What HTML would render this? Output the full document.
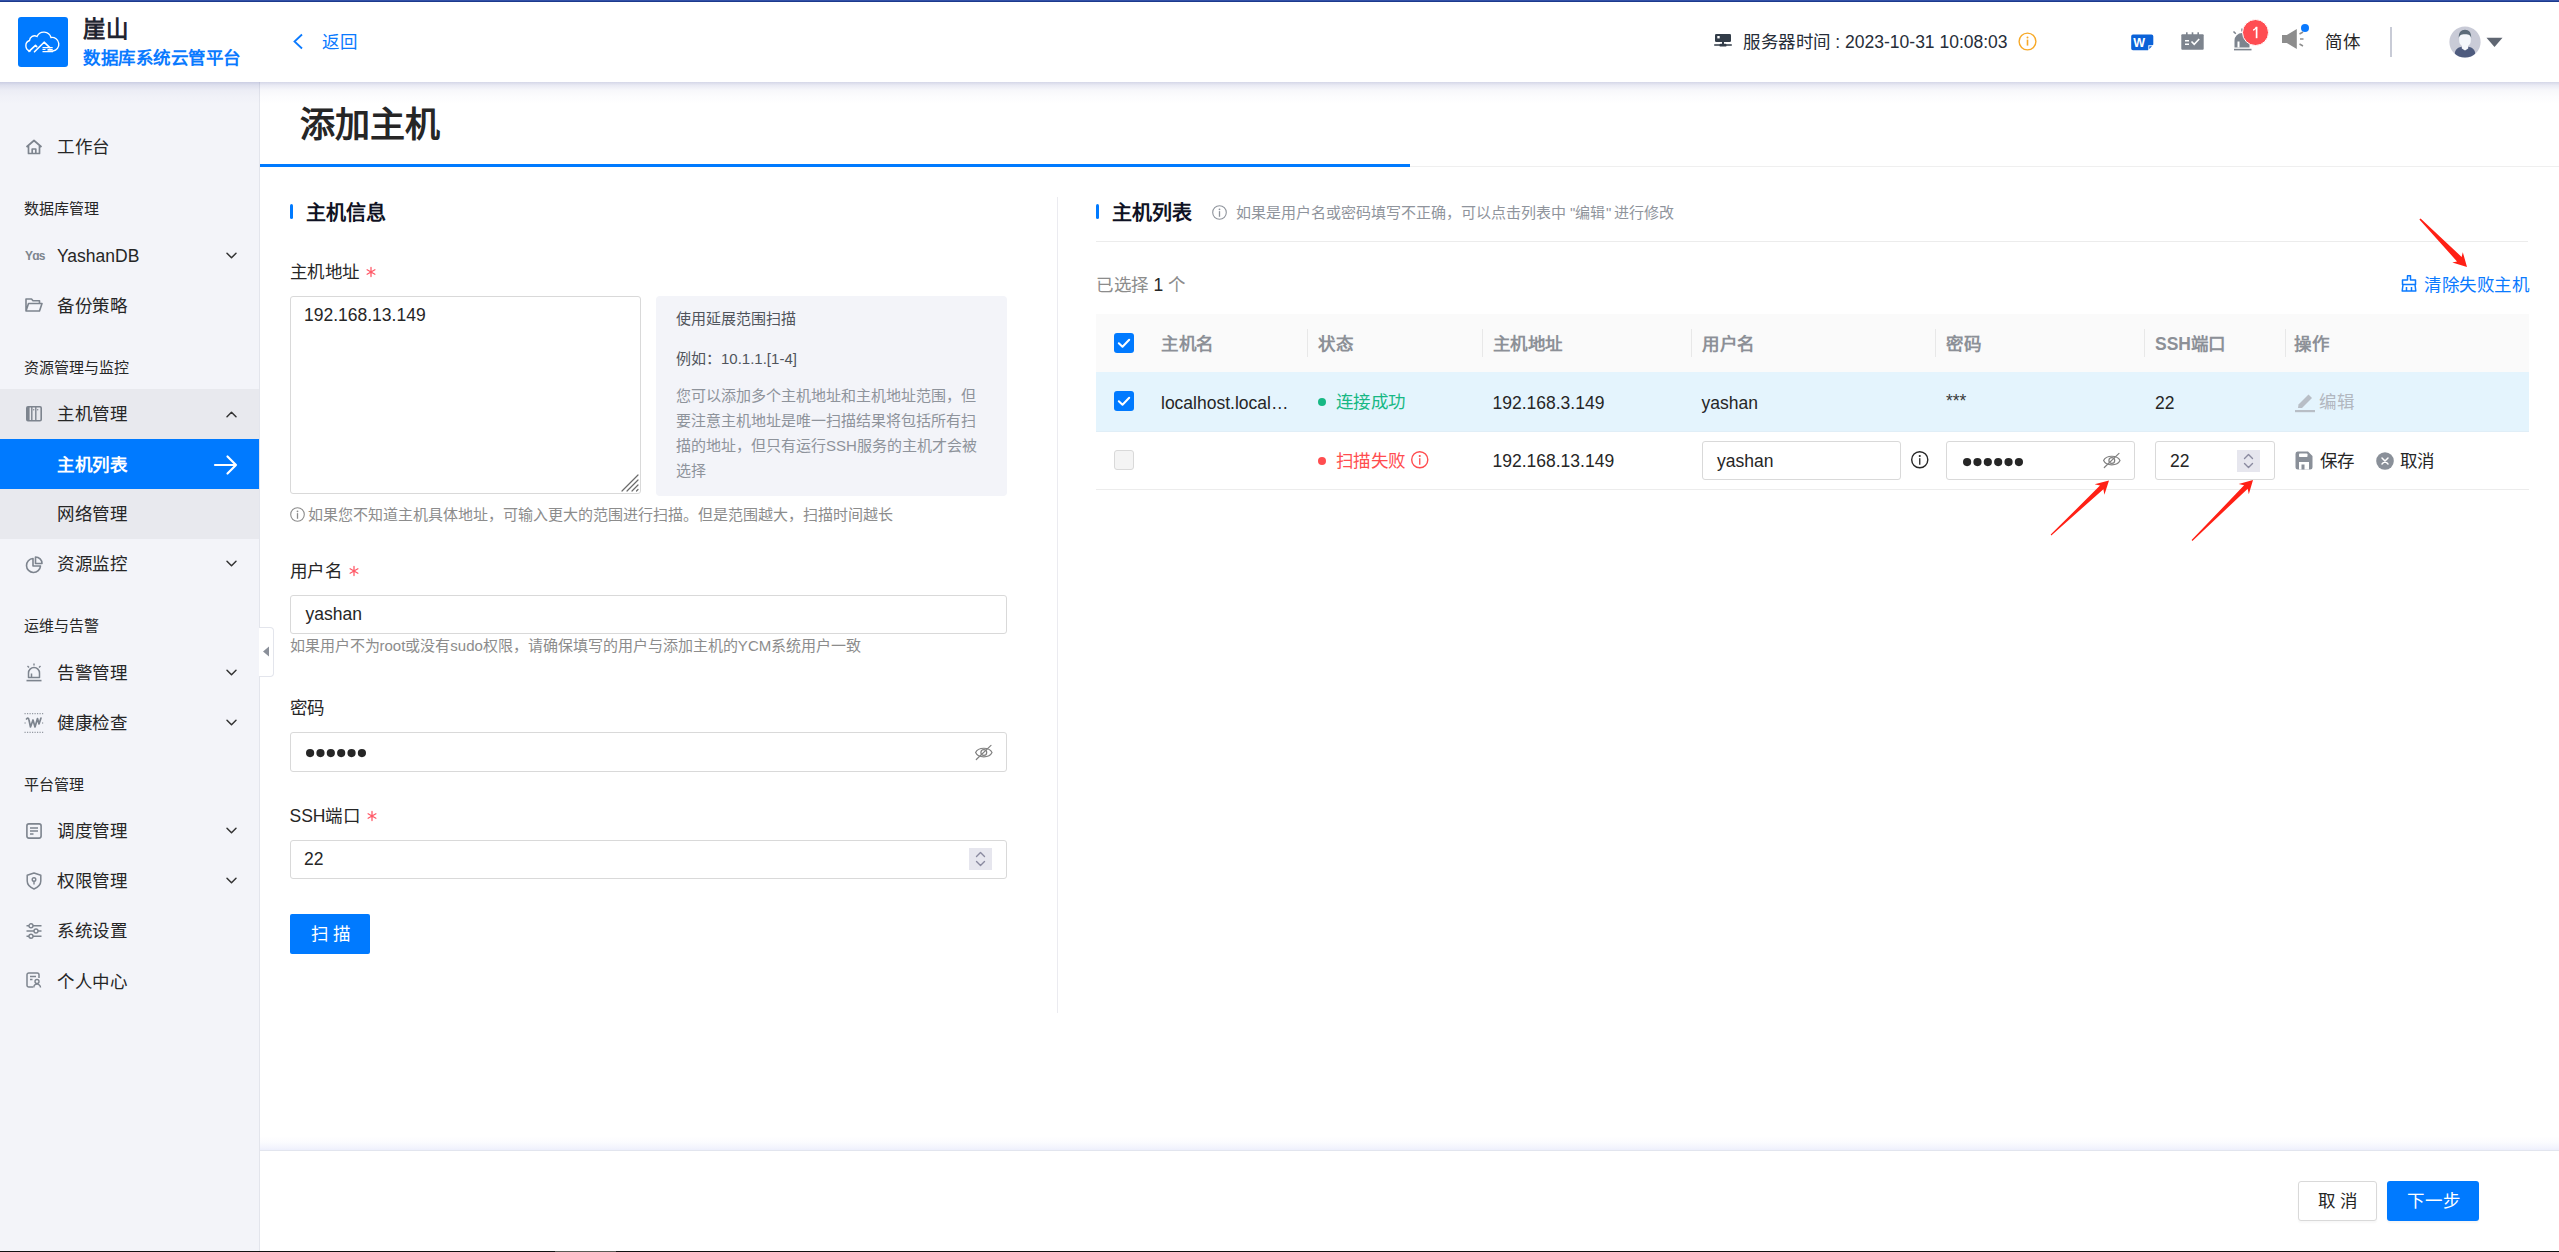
<!DOCTYPE html>
<html lang="zh-CN"><head><meta charset="utf-8">
<style>
*{margin:0;padding:0;box-sizing:border-box}
html,body{width:2559px;height:1252px;overflow:hidden;background:#fff;font-family:"Liberation Sans",sans-serif;color:#262626}
.a{position:absolute;white-space:nowrap}
svg.a{overflow:visible}
</style></head><body>
<div class="a" style="left:0px;top:0px;width:2559px;height:2px;background:linear-gradient(to bottom,#3d5cb4,#112f80);z-index:5"></div>
<div class="a" style="left:0px;top:82px;width:260px;height:1170px;background:#f3f4f9"></div>
<div class="a" style="left:259px;top:82px;width:1px;height:1170px;background:#e3e5ec"></div>
<div class="a" style="left:0px;top:2px;width:2559px;height:80px;background:#fff;z-index:3"></div>
<div class="a" style="left:0px;top:82px;width:2559px;height:22px;z-index:3;background:linear-gradient(to bottom,rgba(60,70,150,0.22) 0%,rgba(60,70,150,0.11) 15%,rgba(60,70,150,0.04) 38%,rgba(60,70,150,0.015) 65%,rgba(60,70,150,0) 100%)"></div>
<div style="position:absolute;left:0;top:0;width:2559px;height:82px;z-index:4">
<div class="a" style="left:18px;top:17px;width:50px;height:50px;background:#007aff;border-radius:3px"></div>
<svg class="a" style="left:24px;top:30px;" width="38" height="26" viewBox="0 0 38 26"><path d="M6 21 A5.5 5.5 0 0 1 5.5 10.5 A5 5 0 0 1 13 6.5 A7.5 7.5 0 0 1 27 7.5 A6.5 6.5 0 0 1 29 21 H24" fill="none" stroke="#fff" stroke-width="1.4" stroke-linecap="round"/><path d="M5 21.4 L11.5 15.4 L12.7 16.6 M10.5 21.8 L20.1 12.2 L25.8 17.6" fill="none" stroke="#fff" stroke-width="1.6" stroke-linecap="round" stroke-linejoin="round"/><path d="M18.5 17.6 H28.7 M18.5 19.5 H21.5 M23.5 19.5 H28.7 M18.5 21.6 H29" stroke="#fff" stroke-width="1.1"/></svg>
<div class="a" style="left:83px;top:13.5px;font-size:22.5px;line-height:32px;color:#1f2430;font-weight:bold;"><span style="letter-spacing:-0.5px">崖山</span></div>
<div class="a" style="left:83px;top:45.3px;font-size:17.5px;line-height:26px;color:#0a7aff;font-weight:bold;"><span style="letter-spacing:0.5px">数据库系统云管平台</span></div>
<svg class="a" style="left:292px;top:33px;" width="12" height="17" viewBox="0 0 12 17"><path d="M10 1.5 L2.5 8.5 L10 15.5" fill="none" stroke="#0a7aff" stroke-width="1.8" stroke-linejoin="miter"/></svg>
<div class="a" style="left:322px;top:29.200000000000003px;font-size:17.5px;line-height:26px;color:#0a7aff;font-weight:normal;"><span style="letter-spacing:0.5px">返回</span></div>
<svg class="a" style="left:1714px;top:34px;" width="18" height="13" viewBox="0 0 18 13"><rect x="1" y="0" width="16" height="8" rx="1.3" fill="#323c48"/><rect x="3.3" y="2" width="2.4" height="2.4" fill="#fff"/><rect x="8" y="8" width="2" height="2.5" fill="#323c48"/><rect x="0" y="10.3" width="18" height="1.5" rx="0.7" fill="#323c48"/><rect x="5.5" y="9.8" width="7" height="2.8" rx="1.2" fill="#323c48"/></svg>
<div class="a" style="left:1743px;top:29.0px;font-size:17.5px;line-height:26px;color:#262d38;font-weight:normal;"><span style="letter-spacing:0.5px">服务器时间</span> : 2023-10-31 10:08:03</div>
<svg class="a" style="left:2018px;top:32px;" width="19" height="19" viewBox="0 0 19 19"><circle cx="9.5" cy="9.5" r="8.4" fill="none" stroke="#f7a928" stroke-width="1.4"/><circle cx="9.5" cy="5.6" r="1" fill="#f7a928"/><rect x="8.7" y="7.6" width="1.6" height="6" fill="#f7a928"/></svg>
<svg class="a" style="left:2131px;top:34px;" width="23" height="17" viewBox="0 0 23 17"><path d="M2 0.5 H20.5 A1.8 1.8 0 0 1 22.3 2.3 V10.5 L17 16.3 H2 A1.8 1.8 0 0 1 0.2 14.5 V2.3 A1.8 1.8 0 0 1 2 0.5 Z" fill="#0b62d8"/><path d="M17.3 16.3 V11.2 H22.3 Z" fill="#fff"/><path d="M18.3 15 V12.2 H21 Z" fill="#0b62d8"/><text x="2.2" y="13.2" font-family="Liberation Sans" font-weight="bold" font-size="12.5" fill="#fff">W</text></svg>
<svg class="a" style="left:2181px;top:32px;" width="23" height="18" viewBox="0 0 23 18"><rect x="0.3" y="2.3" width="22.4" height="15.4" rx="1" fill="#7d848e"/><rect x="5" y="0.3" width="1.6" height="3" fill="#7d848e"/><rect x="10.7" y="0.3" width="1.6" height="3" fill="#7d848e"/><rect x="16.4" y="0.3" width="1.6" height="3" fill="#7d848e"/><rect x="4" y="8" width="4" height="1.5" fill="#fff"/><rect x="4" y="11.5" width="4" height="1.5" fill="#fff"/><path d="M10.5 9.5 L13.2 12.3 L18.2 7" fill="none" stroke="#fff" stroke-width="1.6"/></svg>
<svg class="a" style="left:2232px;top:28px;" width="20" height="23" viewBox="0 0 20 23"><path d="M2.5 19.5 V12.5 A7.5 7.5 0 0 1 17.5 12.5 V19.5 Z" fill="#7d848e"/><rect x="5.5" y="13.5" width="2" height="6" fill="#fff"/><rect x="2" y="20.8" width="17.5" height="1.6" fill="#7d848e"/><path d="M10 0.5 V3.5 M1.5 3.5 L3.8 5.8" stroke="#7d848e" stroke-width="1.5"/></svg>
<div class="a" style="left:2242px;top:19px;width:27px;height:27px;background:#ff4d52;border-radius:50%;border:1px solid #fff"></div>
<svg class="a" style="left:2252px;top:26px;" width="8" height="13" viewBox="0 0 8 13"><path d="M4.6 0.8 V12.2" stroke="#fff" stroke-width="1.7"/><path d="M4.6 1 C3.8 2.6 2.6 3.6 1.2 4.2" fill="none" stroke="#fff" stroke-width="1.5"/></svg>
<svg class="a" style="left:2282px;top:28px;" width="23" height="22" viewBox="0 0 23 22"><path d="M0 7 H4.8 L14.8 1 V21 L4.8 15 H0 Z" fill="#8d8d8d"/><path d="M17.5 6 L21 4 M18 11 H21.5 M17.5 16 L21 18" stroke="#8d8d8d" stroke-width="1.5"/></svg>
<div class="a" style="left:2301px;top:24px;width:8px;height:8px;background:#0a7aff;border-radius:50%"></div>
<div class="a" style="left:2325px;top:28.9px;font-size:17.5px;line-height:26px;color:#262626;font-weight:normal;"><span style="letter-spacing:0.5px">简体</span></div>
<div class="a" style="left:2390px;top:27px;width:2px;height:30px;background:#c8cbd6"></div>
<svg class="a" style="left:2449px;top:26px;" width="32" height="32" viewBox="0 0 32 32"><defs><clipPath id="avc"><circle cx="16" cy="16" r="15.6"/></clipPath></defs><circle cx="16" cy="16" r="15.6" fill="#c9cbd7"/><g clip-path="url(#avc)"><path d="M5.5 30 C5.5 22.5 9.5 20.5 16 20.5 C22.5 20.5 26.5 22.5 26.5 30 V33 H5.5 Z" fill="#4e5b7e"/><path d="M12.8 19 H19.2 V22.5 L16 24.5 L12.8 22.5 Z" fill="#f4f7fb"/><path d="M10.2 10.5 C10.2 6.5 12.5 4.5 16 4.5 C19.5 4.5 21.8 6.5 21.8 10.5 V14.5 C21.8 18.5 19 20.5 16 20.5 C13 20.5 10.2 18.5 10.2 14.5 Z" fill="#f4f7fb"/><path d="M9.8 12 C9.5 6.5 12 3.8 16 3.8 C20 3.8 22.5 6.5 22.2 12 C21.5 9.5 20.5 8.2 16 8.2 C11.5 8.2 10.5 9.5 9.8 12 Z" fill="#5b6b79"/></g></svg>
<svg class="a" style="left:2486px;top:37px;" width="17" height="11" viewBox="0 0 17 11"><path d="M0.5 0.8 H16.5 L8.5 10 Z" fill="#5f6672"/></svg>
</div>
<div class="a" style="left:0px;top:389px;width:259px;height:150px;background:#e8e9ee"></div>
<div class="a" style="left:0px;top:439px;width:259px;height:50px;background:#007aff"></div>
<svg class="a" style="left:25px;top:139px;" width="18" height="16" viewBox="0 0 18 16"><path d="M1.5 8 L9 1.5 L16.5 8 M3.5 6.5 V14.5 H14.5 V6.5 M7.2 14.5 V10 H10.8 V14.5" fill="none" stroke="#7d848e" stroke-width="1.7" stroke-linejoin="round"/></svg>
<div class="a" style="left:57px;top:132.0px;font-size:17.5px;line-height:30px;color:#262626;font-weight:normal;"><span style="letter-spacing:0.5px">工作台</span></div>
<div class="a" style="left:24px;top:196.9px;font-size:15px;line-height:24px;color:#262626;font-weight:normal;">数据库管理</div>
<div class="a" style="left:25px;top:248px;font-size:12px;line-height:16px;color:#7d848e;font-weight:bold;letter-spacing:-0.8px">Y&#593;s</div>
<div class="a" style="left:57px;top:241.0px;font-size:17.5px;line-height:30px;color:#262626;font-weight:normal;">YashanDB</div>
<svg class="a" style="left:226px;top:252.0px;" width="11" height="7" viewBox="0 0 11 6.5"><path d="M1 1 L5.5 5.5 L10 1" fill="none" stroke="#333" stroke-width="1.5" stroke-linecap="round" stroke-linejoin="round"/></svg>
<svg class="a" style="left:25px;top:297px;" width="18" height="16" viewBox="0 0 18 16"><path d="M1 14 V2 H6.5 L8 3.8 H14.5 V6.5 M1 14 L3.5 6.5 H17 L14.5 14 Z" fill="none" stroke="#7d848e" stroke-width="1.6" stroke-linejoin="round"/></svg>
<div class="a" style="left:57px;top:291.0px;font-size:17.5px;line-height:30px;color:#262626;font-weight:normal;"><span style="letter-spacing:0.5px">备份策略</span></div>
<div class="a" style="left:24px;top:356.2px;font-size:15px;line-height:24px;color:#262626;font-weight:normal;">资源管理与监控</div>
<svg class="a" style="left:26px;top:406px;" width="16" height="16" viewBox="0 0 16 16"><rect x="0.8" y="0.8" width="14.4" height="14" rx="1.2" fill="none" stroke="#7d848e" stroke-width="1.6"/><rect x="1" y="1" width="2.6" height="13.6" fill="#7d848e"/><path d="M5.8 1 V14.6 M9.8 1 V14.6" stroke="#7d848e" stroke-width="1.4"/><circle cx="7.7" cy="3.8" r="0.7" fill="#7d848e"/><circle cx="11.7" cy="3.8" r="0.7" fill="#7d848e"/></svg>
<div class="a" style="left:57px;top:398.9px;font-size:17.5px;line-height:30px;color:#262626;font-weight:normal;"><span style="letter-spacing:0.5px">主机管理</span></div>
<svg class="a" style="left:226px;top:410.9px;" width="11" height="7" viewBox="0 0 11 6.5"><path d="M1 5.5 L5.5 1 L10 5.5" fill="none" stroke="#333" stroke-width="1.5" stroke-linecap="round" stroke-linejoin="round"/></svg>
<div class="a" style="left:57px;top:449.8px;font-size:17.5px;line-height:30px;color:#fff;font-weight:bold;"><span style="letter-spacing:0.5px">主机列表</span></div>
<svg class="a" style="left:214px;top:455px;" width="24" height="20" viewBox="0 0 24 20"><path d="M1 10 H22 M13.5 1.5 L22 10 L13.5 18.5" fill="none" stroke="#fff" stroke-width="2.2" stroke-linecap="round" stroke-linejoin="round"/></svg>
<div class="a" style="left:57px;top:499.0px;font-size:17.5px;line-height:30px;color:#262626;font-weight:normal;"><span style="letter-spacing:0.5px">网络管理</span></div>
<svg class="a" style="left:25px;top:556px;" width="18" height="18" viewBox="0 0 18 18"><path d="M8 2.5 A7 7 0 1 0 15.5 10 H8 Z" fill="none" stroke="#7d848e" stroke-width="1.6" stroke-linejoin="round"/><path d="M10.5 1 V7.5 H17 A6.5 6.5 0 0 0 10.5 1 Z" fill="none" stroke="#7d848e" stroke-width="1.6" stroke-linejoin="round"/></svg>
<div class="a" style="left:57px;top:549.0px;font-size:17.5px;line-height:30px;color:#262626;font-weight:normal;"><span style="letter-spacing:0.5px">资源监控</span></div>
<svg class="a" style="left:226px;top:560.0px;" width="11" height="7" viewBox="0 0 11 6.5"><path d="M1 1 L5.5 5.5 L10 1" fill="none" stroke="#333" stroke-width="1.5" stroke-linecap="round" stroke-linejoin="round"/></svg>
<div class="a" style="left:24px;top:614.3px;font-size:15px;line-height:24px;color:#262626;font-weight:normal;">运维与告警</div>
<svg class="a" style="left:26px;top:663px;" width="16" height="19" viewBox="0 0 16 19"><path d="M2.5 14.5 V10 A5.5 5.5 0 0 1 13.5 10 V14.5 Z M5.5 14.5 V10.5" fill="none" stroke="#7d848e" stroke-width="1.5" stroke-linejoin="round"/><path d="M8 0.5 V2.5 M1.5 3 L3 4.5 M14.5 3 L13 4.5" stroke="#7d848e" stroke-width="1.4"/><rect x="0.5" y="16.8" width="15" height="1.6" fill="#7d848e"/></svg>
<div class="a" style="left:57px;top:657.5px;font-size:17.5px;line-height:30px;color:#262626;font-weight:normal;"><span style="letter-spacing:0.5px">告警管理</span></div>
<svg class="a" style="left:226px;top:668.5px;" width="11" height="7" viewBox="0 0 11 6.5"><path d="M1 1 L5.5 5.5 L10 1" fill="none" stroke="#333" stroke-width="1.5" stroke-linecap="round" stroke-linejoin="round"/></svg>
<svg class="a" style="left:24px;top:713px;" width="20" height="20" viewBox="0 0 20 20"><path d="M0.5 0.7 H20 M0.5 19.3 H20 M0.5 10 H2 M18 10 H20" stroke="#7d848e" stroke-width="1" stroke-dasharray="1.2 1.3"/><path d="M2.5 6 Q4.5 4 5 7 L6.5 14 L9 7 L11 14 L13.5 5.5 L15 11 L17 5" fill="none" stroke="#7d848e" stroke-width="1.7" stroke-linejoin="round" stroke-linecap="round"/></svg>
<div class="a" style="left:57px;top:707.7px;font-size:17.5px;line-height:30px;color:#262626;font-weight:normal;"><span style="letter-spacing:0.5px">健康检查</span></div>
<svg class="a" style="left:226px;top:718.7px;" width="11" height="7" viewBox="0 0 11 6.5"><path d="M1 1 L5.5 5.5 L10 1" fill="none" stroke="#333" stroke-width="1.5" stroke-linecap="round" stroke-linejoin="round"/></svg>
<div class="a" style="left:24px;top:772.9px;font-size:15px;line-height:24px;color:#262626;font-weight:normal;">平台管理</div>
<svg class="a" style="left:26px;top:823px;" width="16" height="16" viewBox="0 0 16 16"><rect x="0.9" y="0.9" width="14.2" height="14.2" rx="2" fill="none" stroke="#7d848e" stroke-width="1.6"/><path d="M4 5 H12 M4 8 H12 M4 11 H7.5" stroke="#7d848e" stroke-width="1.4"/></svg>
<div class="a" style="left:57px;top:816.0px;font-size:17.5px;line-height:30px;color:#262626;font-weight:normal;"><span style="letter-spacing:0.5px">调度管理</span></div>
<svg class="a" style="left:226px;top:827.0px;" width="11" height="7" viewBox="0 0 11 6.5"><path d="M1 1 L5.5 5.5 L10 1" fill="none" stroke="#333" stroke-width="1.5" stroke-linecap="round" stroke-linejoin="round"/></svg>
<svg class="a" style="left:26px;top:872px;" width="16" height="18" viewBox="0 0 16 18"><path d="M8 1 L14.8 3.2 V9 C14.8 13 11.5 15.5 8 17 C4.5 15.5 1.2 13 1.2 9 V3.2 Z" fill="none" stroke="#7d848e" stroke-width="1.5" stroke-linejoin="round"/><circle cx="8" cy="7.5" r="1.8" fill="none" stroke="#7d848e" stroke-width="1.4"/><path d="M8 9.3 V12.5" stroke="#7d848e" stroke-width="1.4"/></svg>
<div class="a" style="left:57px;top:865.8px;font-size:17.5px;line-height:30px;color:#262626;font-weight:normal;"><span style="letter-spacing:0.5px">权限管理</span></div>
<svg class="a" style="left:226px;top:876.8px;" width="11" height="7" viewBox="0 0 11 6.5"><path d="M1 1 L5.5 5.5 L10 1" fill="none" stroke="#333" stroke-width="1.5" stroke-linecap="round" stroke-linejoin="round"/></svg>
<svg class="a" style="left:26px;top:923px;" width="16" height="16" viewBox="0 0 16 16"><path d="M0.5 2.8 H3 M7 2.8 H15.5 M0.5 8 H8 M12 8 H15.5 M0.5 13.2 H3 M7 13.2 H15.5" stroke="#7d848e" stroke-width="1.5"/><circle cx="5" cy="2.8" r="2" fill="none" stroke="#7d848e" stroke-width="1.4"/><circle cx="10" cy="8" r="2" fill="none" stroke="#7d848e" stroke-width="1.4"/><circle cx="5" cy="13.2" r="2" fill="none" stroke="#7d848e" stroke-width="1.4"/></svg>
<div class="a" style="left:57px;top:915.5px;font-size:17.5px;line-height:30px;color:#262626;font-weight:normal;"><span style="letter-spacing:0.5px">系统设置</span></div>
<svg class="a" style="left:26px;top:972px;" width="16" height="16" viewBox="0 0 16 16"><path d="M7 15 H2.8 A1.8 1.8 0 0 1 1 13.2 V2.8 A1.8 1.8 0 0 1 2.8 1 H11.2 A1.8 1.8 0 0 1 13 2.8 V6" fill="none" stroke="#7d848e" stroke-width="1.5"/><path d="M4 4.5 H10 M4 7.5 H6.5" stroke="#7d848e" stroke-width="1.3"/><circle cx="11" cy="9.5" r="2" fill="none" stroke="#7d848e" stroke-width="1.4"/><path d="M7.8 15.5 A3.3 3.3 0 0 1 14.5 15.5" fill="none" stroke="#7d848e" stroke-width="1.4"/></svg>
<div class="a" style="left:57px;top:966.5px;font-size:17.5px;line-height:30px;color:#262626;font-weight:normal;"><span style="letter-spacing:0.5px">个人中心</span></div>
<div class="a" style="left:259px;top:627px;width:15px;height:50px;background:#fff;border:1px solid #e3e5ec;border-left:none;border-radius:0 4px 4px 0;z-index:2"></div>
<svg class="a" style="left:262px;top:646px;z-index:3" width="8" height="11" viewBox="0 0 8 11"><path d="M7 0.5 V10.5 L1 5.5 Z" fill="#8a8f99"/></svg>
<div class="a" style="left:300px;top:100.2px;font-size:35px;line-height:50px;color:#262626;font-weight:bold;">添加主机</div>
<div class="a" style="left:260px;top:166px;width:2299px;height:1px;background:#efefef"></div>
<div class="a" style="left:260px;top:164px;width:1150px;height:3px;background:#007aff"></div>
<div class="a" style="left:1057px;top:197px;width:1px;height:816px;background:#ebebf0"></div>
<div class="a" style="left:290px;top:204px;width:3px;height:15px;background:#007aff;border-radius:2px"></div>
<div class="a" style="left:306px;top:197.5px;font-size:20px;line-height:30px;color:#0f1223;font-weight:bold;">主机信息</div>
<div class="a" style="left:289.5px;top:256.7px;font-size:17.5px;line-height:30px;color:#262626;font-weight:normal;"><span style="letter-spacing:0.5px">主机地址</span></div>
<svg class="a" style="left:366px;top:266.5px;" width="10" height="10" viewBox="0 0 10 10"><path d="M5 0.5 V9.5 M1.1 2.75 L8.9 7.25 M1.1 7.25 L8.9 2.75" stroke="#ff5a68" stroke-width="1.3" stroke-linecap="round"/></svg>
<div class="a" style="left:290px;top:296px;width:351px;height:198px;border:1px solid #d9d9d9;border-radius:3px;background:#fff"></div>
<div class="a" style="left:304px;top:302.0px;font-size:17.5px;line-height:26px;color:#262626;font-weight:normal;">192.168.13.149</div>
<svg class="a" style="left:620px;top:473px;" width="20" height="20" viewBox="0 0 20 20"><path d="M2 18 L18 2 M7 18 L18 7 M12 18 L18 12 M16.5 18 L18 16.5" stroke="#6b6b6b" stroke-width="1.2" stroke-linecap="round"/></svg>
<div class="a" style="left:656px;top:296px;width:351px;height:200px;background:#f3f4f9;border-radius:4px"></div>
<div class="a" style="left:676px;top:306.5px;font-size:15px;line-height:24px;color:#50545c;font-weight:normal;">使用延展范围扫描</div>
<div class="a" style="left:676px;top:347.0px;font-size:15px;line-height:24px;color:#50545c;font-weight:normal;">例如：10.1.1.[1-4]</div>
<div class="a" style="left:676px;top:383px;width:312px;white-space:normal;font-size:15px;line-height:25px;color:#8e939b">您可以添加多个主机地址和主机地址范围，但要注意主机地址是唯一扫描结果将包括所有扫描的地址，但只有运行SSH服务的主机才会被选择</div>
<svg class="a" style="left:290px;top:507px;" width="15" height="15" viewBox="0 0 15 15"><circle cx="7.5" cy="7.5" r="6.8" fill="none" stroke="#8c8c8c" stroke-width="1.1"/><circle cx="7.5" cy="4.35" r="0.90" fill="#8c8c8c"/><rect x="6.85" y="6.15" width="1.3" height="5.62" fill="#8c8c8c"/></svg>
<div class="a" style="left:307.5px;top:503.29999999999995px;font-size:15px;line-height:24px;color:#8c8c8c;font-weight:normal;">如果您不知道主机具体地址，可输入更大的范围进行扫描。但是范围越大，扫描时间越长</div>
<div class="a" style="left:289.5px;top:556.2px;font-size:17.5px;line-height:30px;color:#262626;font-weight:normal;"><span style="letter-spacing:0.5px">用户名</span></div>
<svg class="a" style="left:349px;top:566px;" width="10" height="10" viewBox="0 0 10 10"><path d="M5 0.5 V9.5 M1.1 2.75 L8.9 7.25 M1.1 7.25 L8.9 2.75" stroke="#ff5a68" stroke-width="1.3" stroke-linecap="round"/></svg>
<div class="a" style="left:290px;top:595px;width:717px;height:39px;border:1px solid #d9d9d9;border-radius:3px;background:#fff"></div>
<div class="a" style="left:305.5px;top:601.0px;font-size:17.5px;line-height:26px;color:#262626;font-weight:normal;">yashan</div>
<div class="a" style="left:289.5px;top:634.2px;font-size:15px;line-height:24px;color:#8c8c8c;font-weight:normal;">如果用户不为root或没有sudo权限，请确保填写的用户与添加主机的YCM系统用户一致</div>
<div class="a" style="left:289.5px;top:693.4px;font-size:17.5px;line-height:30px;color:#262626;font-weight:normal;"><span style="letter-spacing:0.5px">密码</span></div>
<div class="a" style="left:290px;top:732px;width:717px;height:40px;border:1px solid #d9d9d9;border-radius:3px;background:#fff"></div>
<svg class="a" style="left:306.2px;top:748.6999999999999px;" width="64" height="9" viewBox="0 0 64 9"><circle cx="4.10" cy="4.1" r="4.1" fill="#262626"/><circle cx="14.46" cy="4.1" r="4.1" fill="#262626"/><circle cx="24.82" cy="4.1" r="4.1" fill="#262626"/><circle cx="35.18" cy="4.1" r="4.1" fill="#262626"/><circle cx="45.54" cy="4.1" r="4.1" fill="#262626"/><circle cx="55.90" cy="4.1" r="4.1" fill="#262626"/></svg>
<svg class="a" style="left:975px;top:743.5px;" width="18" height="17" viewBox="0 0 18 17"><path d="M0.6 8.5 C3.2 2.8 14.4 2.8 17 8.5 C14.4 14.2 3.2 14.2 0.6 8.5 Z" fill="none" stroke="#808080" stroke-width="1.2"/><circle cx="8.8" cy="8.5" r="2.9" fill="none" stroke="#808080" stroke-width="1.2"/><path d="M16 1.4 L1.3 15.5" stroke="#808080" stroke-width="1.2" stroke-linecap="round"/></svg>
<div class="a" style="left:289.5px;top:800.8px;font-size:17.5px;line-height:30px;color:#262626;font-weight:normal;">SSH<span style="letter-spacing:0.5px">端口</span></div>
<svg class="a" style="left:367px;top:810.5px;" width="10" height="10" viewBox="0 0 10 10"><path d="M5 0.5 V9.5 M1.1 2.75 L8.9 7.25 M1.1 7.25 L8.9 2.75" stroke="#ff5a68" stroke-width="1.3" stroke-linecap="round"/></svg>
<div class="a" style="left:290px;top:840px;width:717px;height:39px;border:1px solid #d9d9d9;border-radius:3px;background:#fff"></div>
<div class="a" style="left:304px;top:846.2px;font-size:17.5px;line-height:26px;color:#262626;font-weight:normal;">22</div>
<div class="a" style="left:969px;top:848px;width:23px;height:22px;background:#e6e6ee"></div>
<svg class="a" style="left:975px;top:851px;" width="11" height="16" viewBox="0 0 11 16"><path d="M1.5 5.5 L5.5 1.5 L9.5 5.5 M1.5 10.5 L5.5 14.5 L9.5 10.5" fill="none" stroke="#8a8aa0" stroke-width="1.4" stroke-linecap="round" stroke-linejoin="round"/></svg>
<div class="a" style="left:290px;top:914px;width:80px;height:40px;background:#007aff;border-radius:2px;color:#fff;font-size:17.5px;line-height:40px;text-align:center;letter-spacing:5px;text-indent:5px">扫描</div>
<div class="a" style="left:1096px;top:204px;width:3px;height:15px;background:#007aff;border-radius:2px"></div>
<div class="a" style="left:1112px;top:197.9px;font-size:20px;line-height:30px;color:#0f1223;font-weight:bold;">主机列表</div>
<svg class="a" style="left:1212px;top:205px;" width="15" height="15" viewBox="0 0 15 15"><circle cx="7.5" cy="7.5" r="6.8" fill="none" stroke="#8f949c" stroke-width="1.1"/><circle cx="7.5" cy="4.35" r="0.90" fill="#8f949c"/><rect x="6.85" y="6.15" width="1.3" height="5.62" fill="#8f949c"/></svg>
<div class="a" style="left:1236px;top:201.0px;font-size:15px;line-height:24px;color:#8f949c;font-weight:normal;">如果是用户名或密码填写不正确，可以点击列表中</div>
<div class="a" style="left:1570px;top:201.0px;font-size:15px;line-height:24px;color:#8f949c;font-weight:normal;">"</div>
<div class="a" style="left:1575px;top:201.0px;font-size:15px;line-height:24px;color:#8f949c;font-weight:normal;">编辑</div>
<div class="a" style="left:1606px;top:201.0px;font-size:15px;line-height:24px;color:#8f949c;font-weight:normal;">"</div>
<div class="a" style="left:1614px;top:201.0px;font-size:15px;line-height:24px;color:#8f949c;font-weight:normal;">进行修改</div>
<div class="a" style="left:1096px;top:241px;width:1432px;height:1px;background:#ececec"></div>
<div class="a" style="left:1096px;top:270.3px;font-size:17.5px;line-height:30px;color:#8c8c8c"><span style="letter-spacing:0.5px">已选择</span> <span style="color:#262626">1</span> 个</div>
<svg class="a" style="left:2401px;top:275px;" width="16" height="17" viewBox="0 0 16 17"><path d="M6.5 0.8 H9.5 V5 H14.5 V9.5 H1.5 V5 H6.5 Z M2 9.5 L1.2 16 H14.8 L14 9.5 M5.5 12 V16 M10.5 12 V16" fill="none" stroke="#0a7aff" stroke-width="1.5" stroke-linejoin="round"/></svg>
<div class="a" style="left:2424px;top:270.0px;font-size:17.5px;line-height:30px;color:#0a7aff;font-weight:normal;"><span style="letter-spacing:0.5px">清除失败主机</span></div>
<div class="a" style="left:1096px;top:314px;width:1433px;height:58px;background:#fafafa"></div>
<div class="a" style="left:1114px;top:333px;width:20px;height:20px;background:#007aff;border-radius:3px"></div>
<svg class="a" style="left:1114px;top:333px;" width="20" height="20" viewBox="0 0 20 20"><path d="M4.8 10.2 L8.5 13.8 L15.2 6.8" fill="none" stroke="#fff" stroke-width="2" stroke-linecap="round" stroke-linejoin="round"/></svg>
<div class="a" style="left:1161px;top:328.7px;font-size:17.5px;line-height:30px;color:#8c9097;font-weight:bold;"><span style="letter-spacing:0.5px">主机名</span></div>
<div class="a" style="left:1318px;top:328.7px;font-size:17.5px;line-height:30px;color:#8c9097;font-weight:bold;"><span style="letter-spacing:0.5px">状态</span></div>
<div class="a" style="left:1492.5px;top:328.7px;font-size:17.5px;line-height:30px;color:#8c9097;font-weight:bold;"><span style="letter-spacing:0.5px">主机地址</span></div>
<div class="a" style="left:1702px;top:328.7px;font-size:17.5px;line-height:30px;color:#8c9097;font-weight:bold;"><span style="letter-spacing:0.5px">用户名</span></div>
<div class="a" style="left:1946px;top:328.7px;font-size:17.5px;line-height:30px;color:#8c9097;font-weight:bold;"><span style="letter-spacing:0.5px">密码</span></div>
<div class="a" style="left:2155px;top:328.7px;font-size:17.5px;line-height:30px;color:#8c9097;font-weight:bold;">SSH<span style="letter-spacing:0.5px">端口</span></div>
<div class="a" style="left:2294px;top:328.7px;font-size:17.5px;line-height:30px;color:#8c9097;font-weight:bold;"><span style="letter-spacing:0.5px">操作</span></div>
<div class="a" style="left:1307px;top:329px;width:1px;height:28px;background:#e8e8e8"></div>
<div class="a" style="left:1482px;top:329px;width:1px;height:28px;background:#e8e8e8"></div>
<div class="a" style="left:1691px;top:329px;width:1px;height:28px;background:#e8e8e8"></div>
<div class="a" style="left:1935px;top:329px;width:1px;height:28px;background:#e8e8e8"></div>
<div class="a" style="left:2144px;top:329px;width:1px;height:28px;background:#e8e8e8"></div>
<div class="a" style="left:2285px;top:329px;width:1px;height:28px;background:#e8e8e8"></div>
<div class="a" style="left:1096px;top:372px;width:1433px;height:59px;background:#e4f4fd"></div>
<div class="a" style="left:1114px;top:391px;width:20px;height:20px;background:#007aff;border-radius:3px"></div>
<svg class="a" style="left:1114px;top:391px;" width="20" height="20" viewBox="0 0 20 20"><path d="M4.8 10.2 L8.5 13.8 L15.2 6.8" fill="none" stroke="#fff" stroke-width="2" stroke-linecap="round" stroke-linejoin="round"/></svg>
<div class="a" style="left:1161px;top:387.5px;font-size:17.5px;line-height:30px;color:#262626;font-weight:normal;">localhost.local…</div>
<div class="a" style="left:1318px;top:398px;width:8px;height:8px;background:#17b884;border-radius:50%"></div>
<div class="a" style="left:1335.5px;top:387.1px;font-size:17.5px;line-height:30px;color:#17b884;font-weight:normal;"><span style="letter-spacing:0.5px">连接成功</span></div>
<div class="a" style="left:1492.5px;top:387.5px;font-size:17.5px;line-height:30px;color:#262626;font-weight:normal;">192.168.3.149</div>
<div class="a" style="left:1701.5px;top:387.5px;font-size:17.5px;line-height:30px;color:#262626;font-weight:normal;">yashan</div>
<div class="a" style="left:1946px;top:386.0px;font-size:17.5px;line-height:30px;color:#3a3a3a;font-weight:normal;">***</div>
<div class="a" style="left:2155px;top:387.5px;font-size:17.5px;line-height:30px;color:#262626;font-weight:normal;">22</div>
<svg class="a" style="left:2295px;top:391px;" width="21" height="22" viewBox="0 0 21 22"><path d="M3 17 L3.5 13.5 L13.5 3.5 L17 7 L7 17 Z" fill="#b8bec6"/><rect x="0" y="19" width="20" height="2.2" fill="#b8bec6"/></svg>
<div class="a" style="left:2319px;top:386.9px;font-size:17.5px;line-height:30px;color:#b2b7bf;font-weight:normal;"><span style="letter-spacing:0.5px">编辑</span></div>
<div class="a" style="left:1096px;top:431px;width:1433px;height:1px;background:#e0eef7"></div>
<div class="a" style="left:1096px;top:489px;width:1433px;height:1px;background:#ececec"></div>
<div class="a" style="left:1114px;top:450px;width:20px;height:20px;background:#f4f4f4;border:1px solid #d9d9d9;border-radius:3px"></div>
<div class="a" style="left:1318px;top:457px;width:8px;height:8px;background:#ff4d4f;border-radius:50%"></div>
<div class="a" style="left:1335.5px;top:446.0px;font-size:17.5px;line-height:30px;color:#ff4d4f;font-weight:normal;"><span style="letter-spacing:0.5px">扫描失败</span></div>
<svg class="a" style="left:1411px;top:451px;" width="17.5" height="17.5" viewBox="0 0 17.5 17.5"><circle cx="8.75" cy="8.75" r="8.05" fill="none" stroke="#ff4d4f" stroke-width="1.4"/><circle cx="8.75" cy="5.07" r="1.05" fill="#ff4d4f"/><rect x="8.10" y="7.17" width="1.3" height="6.56" fill="#ff4d4f"/></svg>
<div class="a" style="left:1492.5px;top:446.0px;font-size:17.5px;line-height:30px;color:#262626;font-weight:normal;">192.168.13.149</div>
<div class="a" style="left:1702px;top:441px;width:199px;height:39px;border:1px solid #d9d9d9;border-radius:3px;background:#fff"></div>
<div class="a" style="left:1717px;top:446.0px;font-size:17.5px;line-height:30px;color:#262626;font-weight:normal;">yashan</div>
<svg class="a" style="left:1911px;top:451px;" width="17.5" height="17.5" viewBox="0 0 17.5 17.5"><circle cx="8.75" cy="8.75" r="8.05" fill="none" stroke="#262626" stroke-width="1.4"/><circle cx="8.75" cy="5.07" r="1.05" fill="#262626"/><rect x="8.10" y="7.17" width="1.3" height="6.56" fill="#262626"/></svg>
<div class="a" style="left:1946px;top:441px;width:189px;height:39px;border:1px solid #d9d9d9;border-radius:3px;background:#fff"></div>
<svg class="a" style="left:1962.5px;top:457.5px;" width="64" height="9" viewBox="0 0 64 9"><circle cx="4.10" cy="4.1" r="4.1" fill="#262626"/><circle cx="14.46" cy="4.1" r="4.1" fill="#262626"/><circle cx="24.82" cy="4.1" r="4.1" fill="#262626"/><circle cx="35.18" cy="4.1" r="4.1" fill="#262626"/><circle cx="45.54" cy="4.1" r="4.1" fill="#262626"/><circle cx="55.90" cy="4.1" r="4.1" fill="#262626"/></svg>
<svg class="a" style="left:2103px;top:452px;" width="18" height="17" viewBox="0 0 18 17"><path d="M0.6 8.5 C3.2 2.8 14.4 2.8 17 8.5 C14.4 14.2 3.2 14.2 0.6 8.5 Z" fill="none" stroke="#808080" stroke-width="1.2"/><circle cx="8.8" cy="8.5" r="2.9" fill="none" stroke="#808080" stroke-width="1.2"/><path d="M16 1.4 L1.3 15.5" stroke="#808080" stroke-width="1.2" stroke-linecap="round"/></svg>
<div class="a" style="left:2155px;top:441px;width:120px;height:39px;border:1px solid #d9d9d9;border-radius:3px;background:#fff"></div>
<div class="a" style="left:2170px;top:446.0px;font-size:17.5px;line-height:30px;color:#262626;font-weight:normal;">22</div>
<div class="a" style="left:2237px;top:450px;width:23px;height:22px;background:#e6e6ee"></div>
<svg class="a" style="left:2243px;top:453px;" width="11" height="16" viewBox="0 0 11 16"><path d="M1.5 5.5 L5.5 1.5 L9.5 5.5 M1.5 10.5 L5.5 14.5 L9.5 10.5" fill="none" stroke="#8a8aa0" stroke-width="1.4" stroke-linecap="round" stroke-linejoin="round"/></svg>
<svg class="a" style="left:2295px;top:451px;" width="18" height="19" viewBox="0 0 18 19"><path d="M2.5 0.5 H13 L17.5 5 V16 A2.5 2.5 0 0 1 15 18.5 H3 A2.5 2.5 0 0 1 0.5 16 V3 A2.5 2.5 0 0 1 2.5 0.5 Z" fill="#8a9099"/><rect x="4" y="2.5" width="8.5" height="3.5" rx="0.8" fill="#fff"/><rect x="4" y="11" width="10" height="7.5" fill="#fff"/><rect x="6.5" y="13.5" width="3" height="5" fill="#8a9099"/></svg>
<div class="a" style="left:2319.5px;top:446.0px;font-size:17.5px;line-height:30px;color:#262626;font-weight:normal;"><span style="letter-spacing:0.5px">保存</span></div>
<svg class="a" style="left:2376px;top:452px;" width="18" height="18" viewBox="0 0 18 18"><circle cx="9" cy="9" r="8.8" fill="#8a9099"/><path d="M6 6 L12 12 M12 6 L6 12" stroke="#fff" stroke-width="1.5" stroke-linecap="round"/></svg>
<div class="a" style="left:2399.5px;top:446.0px;font-size:17.5px;line-height:30px;color:#262626;font-weight:normal;"><span style="letter-spacing:0.5px">取消</span></div>
<svg class="a" style="left:0;top:0;z-index:6" width="2559" height="1252"><polygon points="2419.4,219.6 2457.0,261.4 2452.3,262.5 2467.0,267.0 2462.8,252.2 2461.6,256.9 2420.6,218.4" fill="#ff2015"/><polygon points="2051.3,535.4 2103.4,489.3 2104.4,494.7 2109.0,480.6 2094.6,484.2 2100.0,485.6 2050.7,534.6" fill="#ff2015"/><polygon points="2192.4,540.9 2247.7,488.8 2248.8,494.3 2253.0,480.0 2238.7,484.0 2244.1,485.3 2191.6,540.1" fill="#ff2015"/></svg>
<div class="a" style="left:260px;top:1136px;width:2299px;height:14px;background:linear-gradient(to bottom,rgba(90,110,230,0) 0%,rgba(90,110,230,0.025) 45%,rgba(90,110,230,0.07) 80%,rgba(90,110,230,0.11) 100%)"></div>
<div class="a" style="left:260px;top:1150px;width:2299px;height:102px;background:#fff"></div>
<div class="a" style="left:260px;top:1150px;width:2299px;height:1px;background:#e2e5ee"></div>
<div class="a" style="left:2298px;top:1181px;width:79px;height:40px;border:1px solid #d9d9d9;border-radius:3px;background:#fff;font-size:17.5px;line-height:38px;text-align:center;color:#262626;letter-spacing:5px;text-indent:5px;box-shadow:0 2px 2px rgba(0,0,0,0.03)">取消</div>
<div class="a" style="left:2387px;top:1181px;width:92px;height:40px;border-radius:3px;background:#007aff;font-size:17.5px;line-height:40px;text-align:center;color:#fff;letter-spacing:1px;text-indent:1px;box-shadow:0 2px 2px rgba(0,0,0,0.04)">下一步</div>
<div class="a" style="left:0px;top:1251px;width:2559px;height:1px;background:#111;z-index:9"></div>
<div class="a" style="left:555px;top:1251px;width:61px;height:1px;background:#5a5a55;z-index:9"></div>
</body></html>
